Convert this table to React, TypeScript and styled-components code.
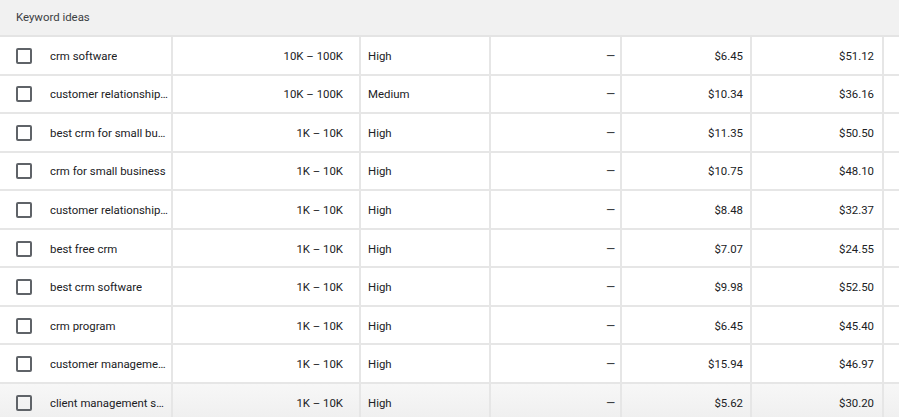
import * as React from "react";
import styled, { createGlobalStyle } from "styled-components";

const GlobalStyle = createGlobalStyle`
    html, body {
        margin: 0;
        padding: 0;
        background: #fff;
        font-family: Roboto, "Liberation Sans", Arial, sans-serif;
        color: #202124;
        overflow: hidden;
    }
`;

type Row = {
    keyword: string,
    searches: string,
    competition: string,
    share: string,
    low: string,
    high: string
};

const rows: Row[] = [
    { keyword: "crm software", searches: "10K – 100K", competition: "High", share: "—", low: "$6.45", high: "$51.12" },
    { keyword: "customer relationship management", searches: "10K – 100K", competition: "Medium", share: "—", low: "$10.34", high: "$36.16" },
    { keyword: "best crm for small business", searches: "1K – 10K", competition: "High", share: "—", low: "$11.35", high: "$50.50" },
    { keyword: "crm for small business", searches: "1K – 10K", competition: "High", share: "—", low: "$10.75", high: "$48.10" },
    { keyword: "customer relationship management software", searches: "1K – 10K", competition: "High", share: "—", low: "$8.48", high: "$32.37" },
    { keyword: "best free crm", searches: "1K – 10K", competition: "High", share: "—", low: "$7.07", high: "$24.55" },
    { keyword: "best crm software", searches: "1K – 10K", competition: "High", share: "—", low: "$9.98", high: "$52.50" },
    { keyword: "crm program", searches: "1K – 10K", competition: "High", share: "—", low: "$6.45", high: "$45.40" },
    { keyword: "customer management software", searches: "1K – 10K", competition: "High", share: "—", low: "$15.94", high: "$46.97" },
    { keyword: "client management software", searches: "1K – 10K", competition: "High", share: "—", low: "$5.62", high: "$30.20" },
];

const Page = styled.div`
    width: 899px;
    height: 417px;
    overflow: hidden;
`;

const Header = styled.div`
    height: 37px;
    box-sizing: border-box;
    background: #f1f1f1;
    border-bottom: 2px solid #e4e4e4;
    display: flex;
    align-items: center;
    padding: 0 0 2px 16px;
    font-size: 11.4px;
    color: #3c4043;
`;

const TableRow = styled.div<{ $hover?: boolean }>`
    display: grid;
    grid-template-columns: 173px 188px 130px 131px 130px 132px 1fr;
    height: 38.56px;
    box-sizing: border-box;
    border-bottom: 2px solid #e6e6e6;
    background: ${p => p.$hover ? "linear-gradient(#f7f7f7, #efefef)" : "#fff"};
`;

const Cell = styled.div<{ $align?: "left" | "right", $padR?: number, $padL?: number }>`
    display: flex;
    align-items: center;
    justify-content: ${p => p.$align === "right" ? "flex-end" : "flex-start"};
    padding-left: ${p => p.$padL ?? 8}px;
    padding-right: ${p => p.$padR ?? 8}px;
    padding-top: 1px;
    border-right: 2px solid #e6e6e6;
    font-size: 11.4px;
    color: #202124;
    min-width: 0;
    white-space: nowrap;
`;

const KeywordCell = styled(Cell)`
    padding-left: 16px;
    padding-right: 2px;
    gap: 18px;
`;

const CheckBox = styled.span`
    flex: 0 0 auto;
    width: 16px;
    height: 16px;
    box-sizing: border-box;
    border: 2px solid #5f6368;
    border-radius: 2px;
`;

const KeywordText = styled.span`
    overflow: hidden;
    text-overflow: ellipsis;
    min-width: 0;
`;

const Dash = styled.span`
    font-weight: 500;
    color: #3c4043;
`;

const LastCell = styled.div``;

export default function App() {
    return (
        <Page>
            <GlobalStyle />
            <Header>Keyword ideas</Header>
            {rows.map((r, i) => (
                <TableRow key={i} $hover={i === rows.length - 1}>
                    <KeywordCell>
                        <CheckBox />
                        <KeywordText>{r.keyword}</KeywordText>
                    </KeywordCell>
                    <Cell $align="right" $padR={16}>{r.searches}</Cell>
                    <Cell $padL={7}>{r.competition}</Cell>
                    <Cell $align="right" $padR={5}><Dash>{r.share}</Dash></Cell>
                    <Cell $align="right" $padR={7}>{r.low}</Cell>
                    <Cell $align="right" $padR={8}>{r.high}</Cell>
                    <LastCell />
                </TableRow>
            ))}
        </Page>
    );
}
